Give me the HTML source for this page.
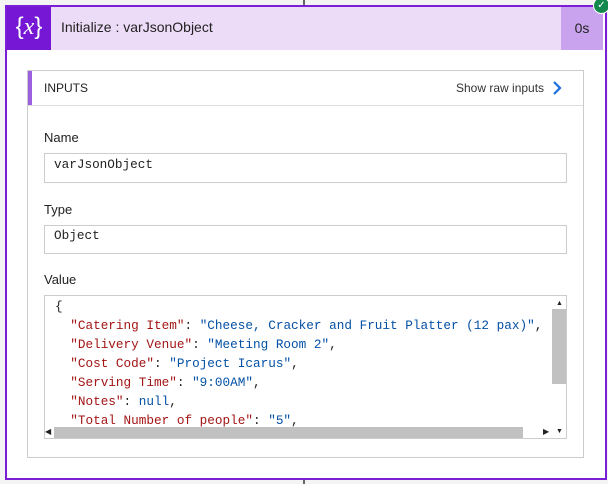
<!DOCTYPE html><html><head><style>
body{margin:0;width:608px;height:484px;background:#f4f4f4;position:relative;overflow:hidden;font-family:"Segoe UI","Liberation Sans",sans-serif;color:#222}
.a{position:absolute}
.mono{font-family:"Liberation Mono","DejaVu Sans Mono",monospace;font-size:12.7px;white-space:pre}
.k{color:#a31515}.s{color:#0451a5}
</style></head><body>
<div class="a" style="left:303px;top:0;width:2px;height:5px;background:#666"></div>
<div class="a" style="left:303px;top:479px;width:2px;height:5px;background:#666"></div>
<div class="a" style="left:5px;top:5px;width:598px;height:471px;border:2px solid #7a1fd6;background:#fff"></div>
<div class="a" style="left:7px;top:7px;width:596px;height:43px;background:#ecdcf7"></div>
<div class="a" style="left:7px;top:7px;width:44px;height:43px;background:#7517d4;color:#fff;font-family:'Liberation Serif',serif;font-size:24px;line-height:40px;text-align:center"><span style="font-family:'Liberation Sans'">{</span><i>x</i><span style="font-family:'Liberation Sans'">}</span></div>
<div class="a" style="left:61px;top:19px;font-size:14px">Initialize : varJsonObject</div>
<div class="a" style="left:561px;top:7px;width:42px;height:43px;background:#c9a3ee;font-size:14px;line-height:43px;text-align:center">0s</div>
<div class="a" style="left:593px;top:-3px;width:15px;height:15px;border-radius:50%;background:#13884c;border:1px solid #fff;color:#fff;font-size:10px;line-height:15px;text-align:center">✓</div>
<div class="a" style="left:27px;top:70px;width:555px;height:386px;border:1px solid #ccc"></div>
<div class="a" style="left:28px;top:71px;width:4px;height:34px;background:#9b5fe0"></div>
<div class="a" style="left:28px;top:105px;width:555px;height:1px;background:#ddd"></div>
<div class="a" style="left:44px;top:81px;font-size:12px">INPUTS</div>
<div class="a" style="left:456px;top:81px;font-size:12px;color:#333">Show raw inputs</div>
<svg class="a" style="left:551px;top:80px" width="12" height="16"><path d="M3 2l6 6-6 6" stroke="#1a6fe0" stroke-width="2.2" fill="none"/></svg>
<div class="a" style="left:44px;top:130px;font-size:13px">Name</div>
<div class="a" style="left:44px;top:153px;width:521px;height:28px;border:1px solid #ccc"></div>
<div class="a mono" style="left:54px;top:157px">varJsonObject</div>
<div class="a" style="left:44px;top:202px;font-size:13px">Type</div>
<div class="a" style="left:44px;top:225px;width:521px;height:27px;border:1px solid #ccc"></div>
<div class="a mono" style="left:54px;top:228px">Object</div>
<div class="a" style="left:44px;top:272px;font-size:13px">Value</div>
<div class="a" style="left:44px;top:295px;width:521px;height:142px;border:1px solid #ccc;overflow:hidden">
<div class="a mono" style="left:10px;top:1px;line-height:19px">{
  <span class="k">"Catering Item"</span>: <span class="s">"Cheese, Cracker and Fruit Platter (12 pax)"</span>,
  <span class="k">"Delivery Venue"</span>: <span class="s">"Meeting Room 2"</span>,
  <span class="k">"Cost Code"</span>: <span class="s">"Project Icarus"</span>,
  <span class="k">"Serving Time"</span>: <span class="s">"9:00AM"</span>,
  <span class="k">"Notes"</span>: <span class="s">null</span>,
  <span class="k">"Total Number of people"</span>: <span class="s">"5"</span>,
  <span class="k">"Number of Gluten Free"</span>: <span class="s">"1"</span>,</div>
<div class="a" style="left:0;top:131px;width:507px;height:11px;background:#fff"></div>
<div class="a" style="left:9px;top:131px;width:469px;height:11px;background:#c1c1c1"></div>
<div class="a" style="left:507px;top:0;width:14px;height:142px;background:#fff"></div>
<div class="a" style="left:507px;top:13px;width:14px;height:75px;background:#c1c1c1"></div>
<div class="a" style="left:511px;top:4px;font-size:7px">▲</div>
<div class="a" style="left:511px;top:132px;font-size:7px">▼</div>
<div class="a" style="left:498px;top:131px;font-size:8px">▶</div>
<div class="a" style="left:0;top:131px;font-size:8px">◀</div>
</div>
</body></html>
